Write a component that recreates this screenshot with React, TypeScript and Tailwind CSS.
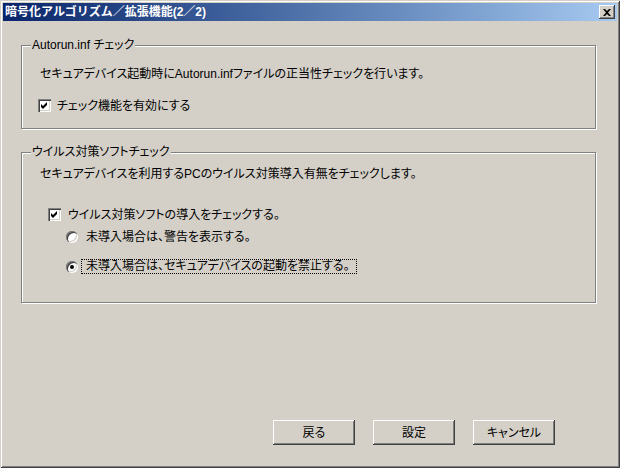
import React from "react";

const font = "font-['Liberation_Sans','Noto_Sans_CJK_JP',sans-serif] [font-feature-settings:'palt']";

function CheckBox() {
    return (
        <span className="flex h-[13px] w-[13px] shrink-0 items-center justify-center bg-white shadow-[inset_1px_1px_0_#808080,inset_2px_2px_0_#404040,inset_-1px_-1px_0_#ffffff,inset_-2px_-2px_0_#d4d0c8]">
            <svg width="7" height="7" viewBox="0 0 7 7">
                <path d="M0 2 L2 4 L6 0 V3 L2 7 L0 5 Z" fill="#000" />
            </svg>
        </span>
    );
}

function Radio({ checked }: { checked?: boolean }) {
    return (
        <span className="flex h-[12px] w-[12px] shrink-0 items-center justify-center rounded-full bg-white shadow-[inset_1px_1px_0_#808080,inset_2px_2px_0_#404040,inset_-1px_-1px_0_#ffffff,inset_-2px_-2px_0_#d4d0c8]">
            {checked ? <span className="h-[4px] w-[4px] rounded-full bg-black" /> : null}
        </span>
    );
}

function Button({ label }: { label: string }) {
    return (
        <button className="flex h-[25px] w-[82px] items-center justify-center bg-[#d4d0c8] text-[12px] text-black shadow-[inset_-1px_-1px_0_#404040,inset_1px_1px_0_#ffffff,inset_-2px_-2px_0_#808080]">
            {label}
        </button>
    );
}

function GroupLabel({ text }: { text: string }) {
    return (
        <div className="-mt-[8px] flex h-[14px]">
            <span className="ml-[9px] bg-[#d4d0c8] px-[1px] text-[12px] leading-[14px]">{text}</span>
        </div>
    );
}

export default function App() {
    return (
        <div className={`flex h-[468px] w-[620px] flex-col bg-[#d4d0c8] p-[3px] text-black ${font} shadow-[inset_1px_1px_0_#d4d0c8,inset_-1px_-1px_0_#404040,inset_2px_2px_0_#ffffff,inset_-2px_-2px_0_#808080]`}>
            <div className="flex h-[18px] items-center justify-between bg-gradient-to-r from-[#0a246a] to-[#a6caf0] pl-[2px] pr-[2px]">
                <span className="text-[12px] font-bold leading-[14px] text-white [font-feature-settings:normal]">暗号化アルゴリズム／拡張機能(2／2)</span>
                <span className="flex h-[14px] w-[16px] items-center justify-center bg-[#d4d0c8] shadow-[inset_-1px_-1px_0_#404040,inset_1px_1px_0_#ffffff,inset_-2px_-2px_0_#808080]">
                    <svg width="8" height="7" viewBox="0 0 8 7">
                        <path d="M0 0 H2 L4 2 L6 0 H8 L5 3.5 L8 7 H6 L4 5 L2 7 H0 L3 3.5 Z" fill="#000" />
                    </svg>
                </span>
            </div>

            <div className="flex flex-col pl-[18px] pr-[21px]">
                <div className="mt-[24px] flex h-[84px] flex-col border border-[#808080] shadow-[1px_1px_0_#ffffff,inset_1px_1px_0_#ffffff]">
                    <GroupLabel text="Autorun.inf チェック" />
                    <p className="ml-[18px] mt-[15px] text-[12px] leading-[14px]">
                        セキュアデバイス起動時にAutorun.infファイルの正当性チェックを行います。
                    </p>
                    <div className="ml-[16px] mt-[18px] flex h-[13px] items-center gap-[6px]">
                        <CheckBox />
                        <span className="text-[12px] leading-[14px]">チェック機能を有効にする</span>
                    </div>
                </div>

                <div className="mt-[23px] flex h-[151px] flex-col border border-[#808080] shadow-[1px_1px_0_#ffffff,inset_1px_1px_0_#ffffff]">
                    <GroupLabel text="ウイルス対策ソフトチェック" />
                    <p className="ml-[18px] mt-[8px] text-[12px] leading-[14px]">
                        セキュアデバイスを利用するPCのウイルス対策導入有無をチェックします。
                    </p>
                    <div className="ml-[26px] mt-[27px] flex h-[13px] items-center gap-[7px]">
                        <CheckBox />
                        <span className="text-[12px] leading-[14px]">ウイルス対策ソフトの導入をチェックする。</span>
                    </div>
                    <div className="ml-[44px] mt-[10px] flex h-[12px] items-center gap-[8px]">
                        <Radio />
                        <span className="text-[12px] leading-[14px]">未導入場合は、警告を表示する。</span>
                    </div>
                    <div className="ml-[44px] mt-[16px] flex h-[15px] items-center gap-[3px]">
                        <Radio checked />
                        <span className="flex h-[15px] items-center border border-dotted border-black pl-[4px] pr-[6px] text-[12px] leading-[13px]">
                            未導入場合は、セキュアデバイスの起動を禁止する。
                        </span>
                    </div>
                </div>

                <div className="mt-[117px] flex justify-end gap-[18px] pr-[41px]">
                    <Button label="戻る" />
                    <Button label="設定" />
                    <Button label="キャンセル" />
                </div>
            </div>
        </div>
    );
}
